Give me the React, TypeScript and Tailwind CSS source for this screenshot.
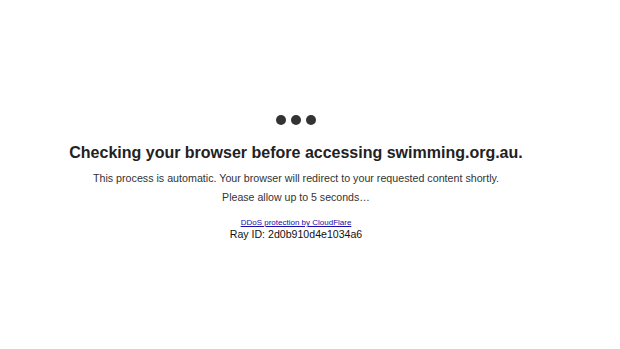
export default function App() {
  return (
    <div className="w-[620px] h-[349px] bg-white text-[#333] font-['Liberation_Sans',Arial,sans-serif]">
      <div className="w-[592px] flex flex-col items-center">
        <div className="mt-[115px] flex gap-[5px]">
          <span className="w-[10px] h-[10px] rounded-full bg-[#333]" />
          <span className="w-[10px] h-[10px] rounded-full bg-[#333]" />
          <span className="w-[10px] h-[10px] rounded-full bg-[#333]" />
        </div>
        <h1 className="mt-[18px] text-[16px] leading-[19px] font-bold text-[#222]">
          Checking your browser before accessing swimming.org.au.
        </h1>
        <p className="mt-[10px] text-[10.7px] leading-[13px]">
          This process is automatic. Your browser will redirect to your requested content shortly.
        </p>
        <p className="mt-[6px] text-[10.6px] leading-[13px]">Please allow up to 5 seconds…</p>
        <a href="#" className="mt-[14px] text-[8px] leading-[10px] text-[#1a0dab] underline">
          DDoS protection by CloudFlare
        </a>
        <p className="text-[10.6px] leading-[13px] text-[#111]">Ray ID: 2d0b910d4e1034a6</p>
      </div>
    </div>
  );
}
